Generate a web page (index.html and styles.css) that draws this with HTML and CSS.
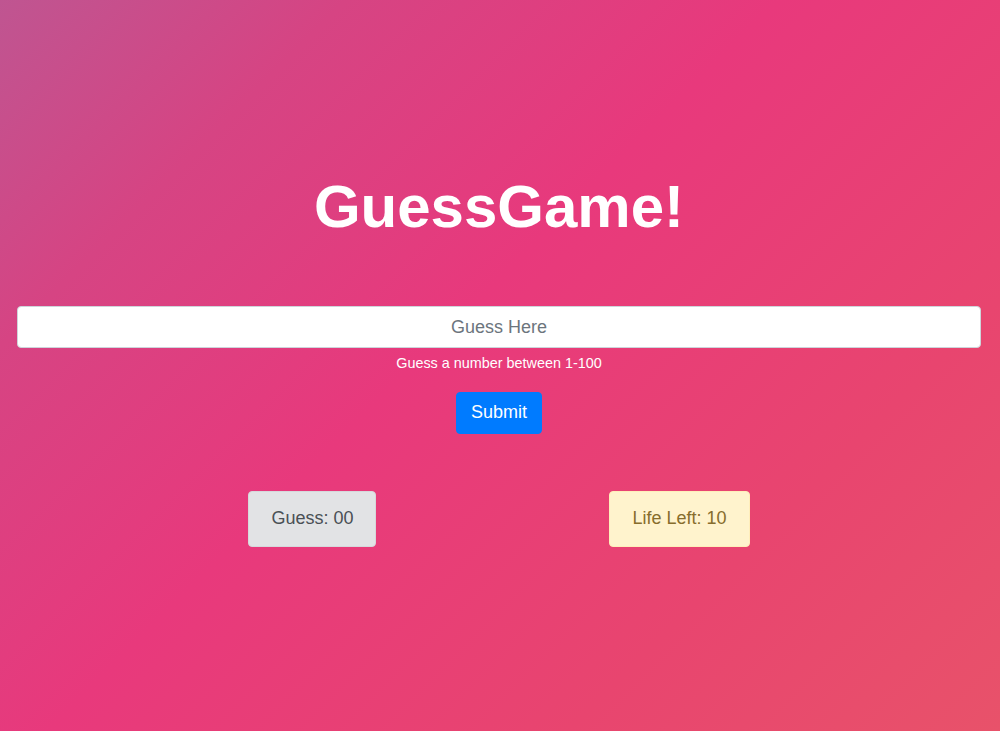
FILE: index.html
```html
<!DOCTYPE html>
<html lang="en">
<head>
<meta charset="utf-8">
<title>GuessGame</title>
<link rel="stylesheet" href="styles.css">
</head>
<body>
<main class="page">
  <h1 class="title">GuessGame!</h1>
  <form class="guess-form">
    <div class="form-group">
      <input class="form-control" type="text" placeholder="Guess Here">
      <small class="form-text">Guess a number between 1-100</small>
    </div>
    <button type="button" class="btn">Submit</button>
  </form>
  <div class="stats">
    <div class="alert alert-secondary">Guess: 00</div>
    <div class="alert alert-warning">Life Left: 10</div>
  </div>
</main>
</body>
</html>
```

FILE: styles.css
```css
html, body {
  margin: 0;
  padding: 0;
  height: 100%;
}
body {
  font-family: "Liberation Sans", Arial, sans-serif;
  font-size: 18px;
  line-height: 1.5;
  color: #212529;
  background: linear-gradient(135deg, #bf5591 0%, #d64483 20%, #e8397c 45%, #e8456f 75%, #e8526a 100%);
  overflow: hidden;
}
.page {
  display: flex;
  flex-direction: column;
  align-items: center;
  padding: 171px 19px 0 17px;
}
.title {
  margin: 0 0 63px;
  font-size: 60px;
  line-height: 72px;
  font-weight: 700;
  color: #fff;
}
.guess-form {
  width: 100%;
  display: flex;
  flex-direction: column;
  align-items: center;
}
.form-group {
  width: 100%;
  margin-bottom: 17px;
  display: flex;
  flex-direction: column;
  align-items: center;
}
.form-control {
  box-sizing: border-box;
  width: 100%;
  height: 42px;
  padding: 6px 12px;
  font-family: inherit;
  font-size: 18px;
  line-height: 1.5;
  text-align: center;
  color: #495057;
  background: #fff;
  border: 1px solid #ced4da;
  border-radius: 4px;
  outline: none;
}
.form-control::placeholder {
  color: #6c757d;
  opacity: 1;
}
.form-text {
  display: block;
  margin-top: 5px;
  font-size: 14.4px;
  line-height: 1.5;
  color: #fff;
}
.btn {
  box-sizing: border-box;
  height: 42px;
  padding: 6px 14px;
  font-family: inherit;
  font-size: 18px;
  line-height: 1.5;
  color: #fff;
  background: #007bff;
  border: 1px solid #007bff;
  border-radius: 4px;
  cursor: pointer;
}
.stats {
  display: flex;
  justify-content: center;
  gap: 233px;
  margin-top: 57px;
}
.alert {
  box-sizing: border-box;
  height: 56px;
  padding: 13px 22px;
  border: 1px solid transparent;
  border-radius: 4px;
  font-size: 18px;
  line-height: 27px;
}
.alert-secondary {
  color: #4a5055;
  background: #e2e3e5;
  border-color: #d6d8db;
}
.alert-warning {
  color: #876d2c;
  background: #fff3cd;
  border-color: #ffeeba;
}
```
